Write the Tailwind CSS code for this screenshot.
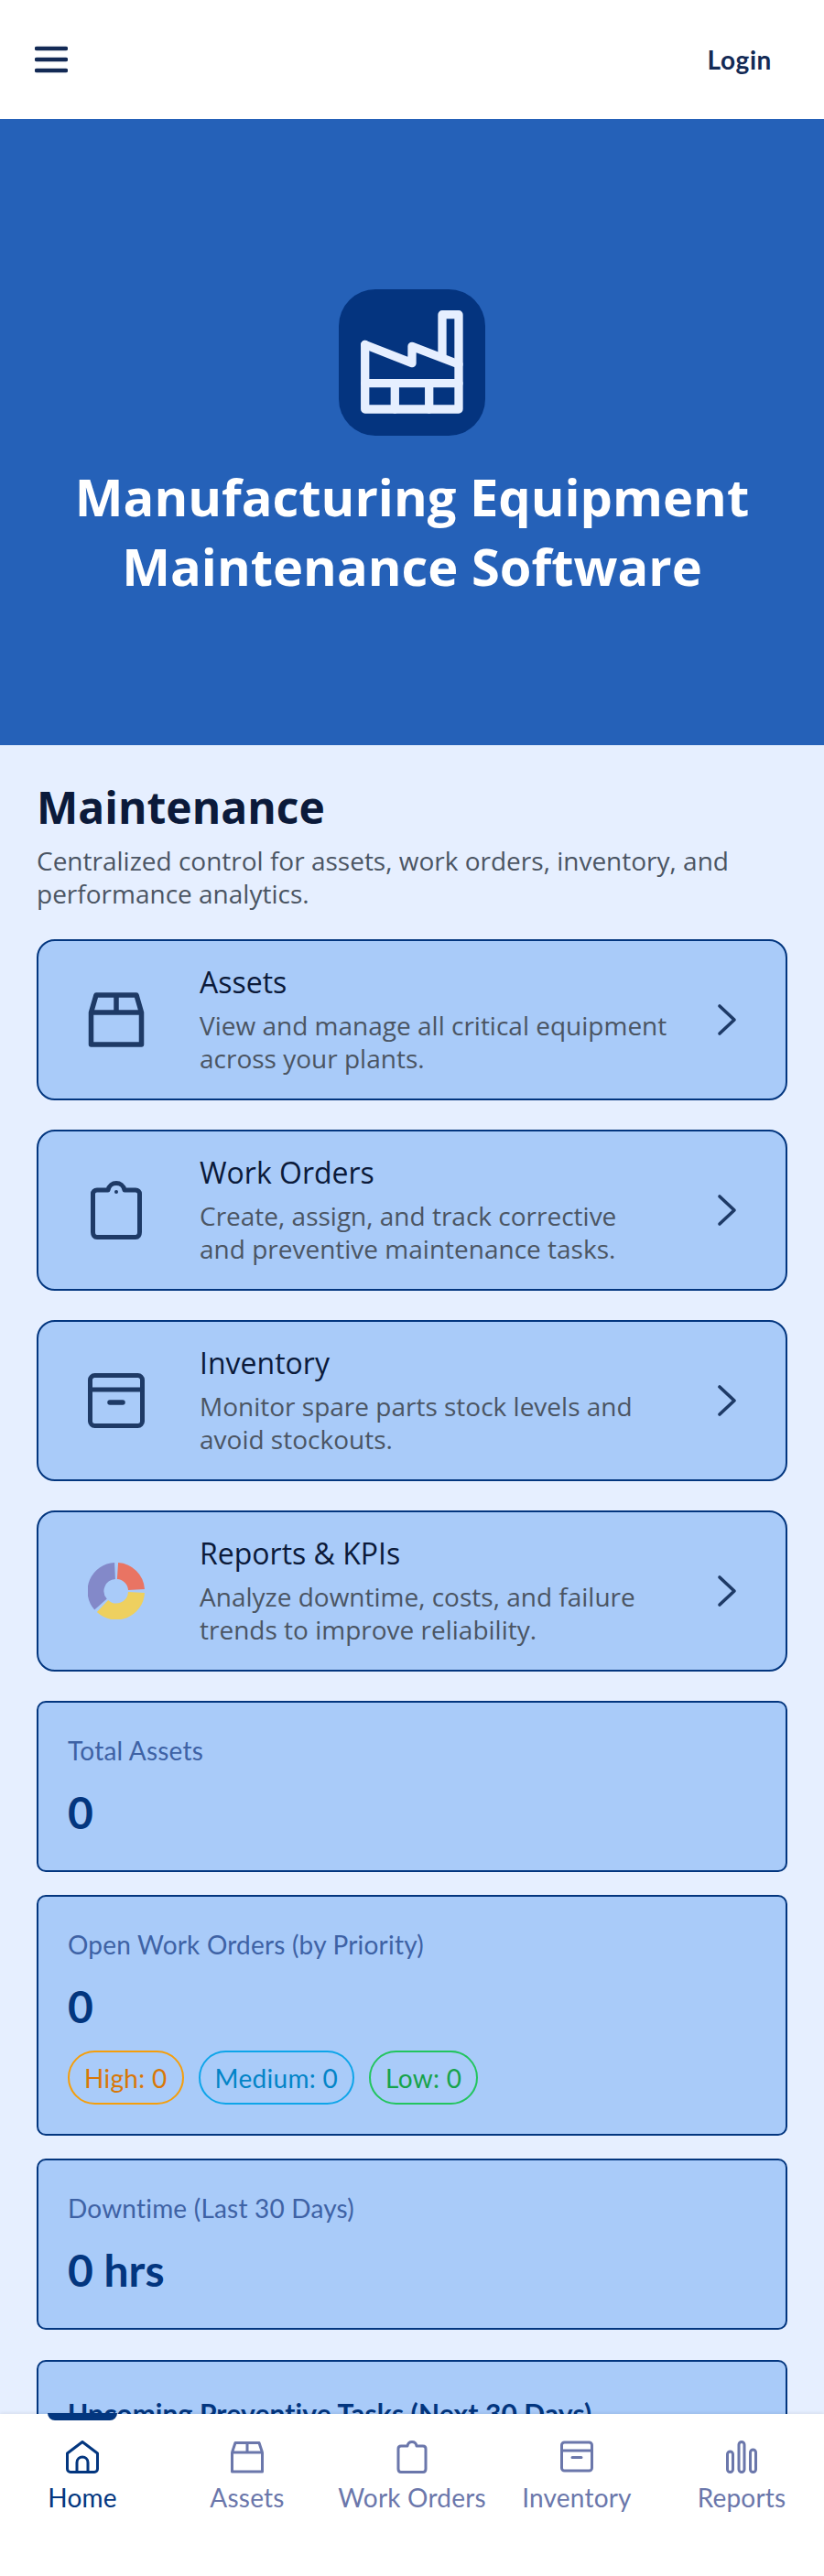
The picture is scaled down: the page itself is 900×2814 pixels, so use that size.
<!DOCTYPE html>
<html lang="en">
<head>
  <meta charset="UTF-8" />
  <meta name="viewport" content="width=device-width, initial-scale=1" />
  <title>Manufacturing Equipment Maintenance Software</title>
  <script src="https://cdn.jsdelivr.net/npm/@tailwindcss/browser@4"></script>
</head>
<body class="bg-white font-['Open_Sans',sans-serif]">
  <div class="relative flex h-[2814px] w-[900px] flex-col overflow-hidden">

    <!-- Header -->
    <header class="flex h-[130px] shrink-0 items-center justify-between bg-white pl-[38px] pr-[57px]">
      <svg class="h-[30px] w-[36px]" viewBox="0 0 36 30" fill="none" stroke="#132a55" stroke-width="4.500" stroke-linecap="round">
        <path d="M2 3h32M2 15h32M2 27h32" />
      </svg>
      <span class="font-['Lato',sans-serif] text-[28px] font-bold tracking-[0.6px] text-[#132a55]">Login</span>
    </header>

    <main class="min-h-0 flex-1 overflow-hidden bg-[#e6efff]">
      <!-- Hero -->
      <section class="flex h-[684px] flex-col items-center bg-[#2561b8] pt-[186px]">
        <div class="flex h-[160px] w-[160px] items-center justify-center rounded-[40px] bg-[#04347f]">
          <svg class="h-[160px] w-[160px]" viewBox="0 0 160 160" fill="none" stroke="#e6efff" stroke-width="9.3" stroke-linejoin="round" stroke-linecap="round">
            <path d="M28.7 60.5V131H131V27.7H113V72" />
            <path d="M28.7 60.5L80 80.7V62.3L131 82" />
            <path d="M28.7 102.7H131M61.3 102.7V131M98.7 102.7V131" />
          </svg>
        </div>
        <h1 class="mt-[28px] text-center text-[56px] font-bold leading-[76px] text-white">Manufacturing Equipment<br />Maintenance Software</h1>
      </section>

      <section class="px-[40px] pt-[34px]">
        <h2 class="text-[48px] font-bold leading-[68px] text-[#0b1a3a]">Maintenance</h2>
        <p class="mt-[6px] text-[28px] leading-[36px] text-[#4b5563]">Centralized control for assets, work orders, inventory, and performance analytics.</p>

        <!-- Nav cards -->
        <div class="mt-[32px] flex flex-col gap-[32px]">
          <a class="flex h-[176px] items-center rounded-[20px] border-2 border-[#03367f] bg-[#a9cbf9] pl-[54px] pr-[52px]">
            <svg class="h-[60px] w-[62px] shrink-0" viewBox="0 0 62 60" fill="none" stroke="#1e3a66" stroke-width="5.5" stroke-linejoin="round">
              <path d="M3.5 22H58.5V57H3.5ZM3.5 22L9 3H53L58.5 22M31 3V22" />
            </svg>
            <div class="ml-[60px] w-[522px] shrink-0">
              <h3 class="text-[32px] font-medium leading-[38px] text-[#0b1a3a]">Assets</h3>
              <p class="mt-[10px] text-[28px] leading-[36px] text-[#4b5563]">View and manage all critical equipment across your plants.</p>
            </div>
            <svg class="ml-auto h-[36px] w-[24px] shrink-0" viewBox="0 0 24 36" fill="none" stroke="#1e3a66" stroke-width="3.6" stroke-linecap="round" stroke-linejoin="round">
              <path d="M4 3L20 18L4 33" />
            </svg>
          </a>

          <a class="flex h-[176px] items-center rounded-[20px] border-2 border-[#03367f] bg-[#a9cbf9] pl-[54px] pr-[52px]">
            <svg class="h-[64px] w-[62px] shrink-0" viewBox="0 0 62 64" fill="none" stroke="#1e3a66" stroke-width="5" stroke-linejoin="round">
              <path d="M10 10H22C23 5 27 2.5 31 2.5C35 2.5 39 5 40 10H52C55 10 56.500 12 56.500 14V56C56.500 59 55 61.500 52 61.500H10C7 61.500 5.500 59 5.500 56V14C5.500 12 7 10 10 10Z" />
              <circle cx="31" cy="12" r="2" fill="#1e3a66" stroke="none" />
            </svg>
            <div class="ml-[60px] w-[522px] shrink-0">
              <h3 class="text-[32px] font-medium leading-[38px] text-[#0b1a3a]">Work Orders</h3>
              <p class="mt-[10px] text-[28px] leading-[36px] text-[#4b5563]">Create, assign, and track corrective<br />and preventive maintenance tasks.</p>
            </div>
            <svg class="ml-auto h-[36px] w-[24px] shrink-0" viewBox="0 0 24 36" fill="none" stroke="#1e3a66" stroke-width="3.6" stroke-linecap="round" stroke-linejoin="round">
              <path d="M4 3L20 18L4 33" />
            </svg>
          </a>

          <a class="flex h-[176px] items-center rounded-[20px] border-2 border-[#03367f] bg-[#a9cbf9] pl-[54px] pr-[52px]">
            <svg class="h-[60px] w-[62px] shrink-0" viewBox="0 0 62 60" fill="none" stroke="#1e3a66" stroke-width="5" stroke-linejoin="round" stroke-linecap="round">
              <rect x="2.500" y="2.500" width="57" height="55" rx="5" />
              <path d="M2.500 18H59.500" />
              <path d="M24 32H38" stroke-width="5.500" />
            </svg>
            <div class="ml-[60px] w-[522px] shrink-0">
              <h3 class="text-[32px] font-medium leading-[38px] text-[#0b1a3a]">Inventory</h3>
              <p class="mt-[10px] text-[28px] leading-[36px] text-[#4b5563]">Monitor spare parts stock levels and avoid stockouts.</p>
            </div>
            <svg class="ml-auto h-[36px] w-[24px] shrink-0" viewBox="0 0 24 36" fill="none" stroke="#1e3a66" stroke-width="3.6" stroke-linecap="round" stroke-linejoin="round">
              <path d="M4 3L20 18L4 33" />
            </svg>
          </a>

          <a class="flex h-[176px] items-center rounded-[20px] border-2 border-[#03367f] bg-[#a9cbf9] pl-[54px] pr-[52px]">
            <svg class="h-[62px] w-[62px] shrink-0" viewBox="0 0 62 62" fill="none" stroke-width="18">
              <path d="M32.500 9A22 22 0 0 1 53 29.500" stroke="#e97463" />
              <path d="M53 32.500A22 22 0 0 1 16 47.500" stroke="#eed05f" />
              <path d="M14 45.500A22 22 0 0 1 29.500 9" stroke="#8389c9" />
            </svg>
            <div class="ml-[60px] w-[522px] shrink-0">
              <h3 class="text-[32px] font-medium leading-[38px] text-[#0b1a3a]">Reports &amp; KPIs</h3>
              <p class="mt-[10px] text-[28px] leading-[36px] text-[#4b5563]">Analyze downtime, costs, and failure trends to improve reliability.</p>
            </div>
            <svg class="ml-auto h-[36px] w-[24px] shrink-0" viewBox="0 0 24 36" fill="none" stroke="#1e3a66" stroke-width="3.6" stroke-linecap="round" stroke-linejoin="round">
              <path d="M4 3L20 18L4 33" />
            </svg>
          </a>
        </div>

        <!-- Stat cards -->
        <div class="mt-[32px] font-['Lato',sans-serif]">
          <div class="h-[187px] rounded-[10px] border-2 border-[#03367f] bg-[#a9cbf9] px-[32px] pt-[34px]">
            <p class="text-[28px] leading-[36px] tracking-[0.2px] text-[#3e62a5]">Total Assets</p>
            <p class="mt-[22px] text-[48px] font-bold leading-[56px] text-[#03367f]">0</p>
          </div>
          <div class="mt-[25px] h-[263px] rounded-[10px] border-2 border-[#03367f] bg-[#a9cbf9] px-[32px] pt-[34px]">
            <p class="text-[28px] leading-[36px] tracking-[0.2px] text-[#3e62a5]">Open Work Orders (by Priority)</p>
            <p class="mt-[22px] text-[48px] font-bold leading-[56px] text-[#03367f]">0</p>
            <div class="mt-[20px] flex gap-[16px] text-[28px] tracking-[0.3px]">
              <span class="flex h-[59px] items-center rounded-full border-2 border-[#f59e0b] px-[16px] text-[#d97706]">High: 0</span>
              <span class="flex h-[59px] items-center rounded-full border-2 border-[#0ea5e9] px-[16px] text-[#0284c7]">Medium: 0</span>
              <span class="flex h-[59px] items-center rounded-full border-2 border-[#22c55e] px-[16px] text-[#16a34a]">Low: 0</span>
            </div>
          </div>
          <div class="mt-[25px] h-[187px] rounded-[10px] border-2 border-[#03367f] bg-[#a9cbf9] px-[32px] pt-[34px]">
            <p class="text-[28px] leading-[36px] tracking-[0.2px] text-[#3e62a5]">Downtime (Last 30 Days)</p>
            <p class="mt-[22px] text-[48px] font-bold leading-[56px] text-[#03367f]">0 hrs</p>
          </div>
          <div class="mt-[33px] h-[187px] rounded-[10px] border-2 border-[#03367f] bg-[#a9cbf9] px-[32px] pt-[38px]">
            <p class="text-[30px] font-bold leading-[36px] tracking-[0.1px] text-[#03367f]">Upcoming Preventive Tasks (Next 30 Days)</p>
          </div>
        </div>
      </section>
    </main>

    <!-- Bottom nav -->
    <nav class="relative grid h-[177px] shrink-0 grid-cols-5 bg-white pt-[29px] font-['Lato',sans-serif] text-[28px] tracking-[0.2px] text-[#6b77ab] shadow-[0_-1px_4px_rgba(0,0,0,0.08)]">
      <span class="absolute left-[52px] top-[-1px] h-[8px] w-[76px] rounded-b-[8px] bg-[#03367f]"></span>
      <div class="flex flex-col items-center text-[#03367f]">
        <svg class="h-[36px] w-[36px]" viewBox="0 0 36 36" fill="none" stroke="#03367f" stroke-width="3" stroke-linejoin="round">
          <path d="M1.500 14L18 1.500L34.500 14V31C34.500 33 33 34.500 31 34.500H5C3 34.500 1.500 33 1.500 31Z" />
          <path d="M12 34.500V24C12 20 15 18 18 18C21 18 24 20 24 24V34.500" />
        </svg>
        <span class="mt-[8px] leading-[36px]">Home</span>
      </div>
      <div class="flex flex-col items-center">
        <svg class="h-[36px] w-[36px]" viewBox="0 0 36 36" fill="none" stroke="#6b77ab" stroke-width="3" stroke-linejoin="round">
          <path d="M1.500 13H34.500V34H1.500ZM1.500 13L5 2.500H31L34.500 13M18 2.500V13" />
        </svg>
        <span class="mt-[8px] leading-[36px]">Assets</span>
      </div>
      <div class="flex flex-col items-center">
        <svg class="h-[36px] w-[36px]" viewBox="0 0 36 36" fill="none" stroke="#6b77ab" stroke-width="3" stroke-linejoin="round">
          <path d="M6 6H13C13.500 3 15.500 1.500 18 1.500C20.500 1.500 22.500 3 23 6H30C32 6 33 7.500 33 9V31C33 33 32 34.500 30 34.500H6C4 34.500 3 33 3 31V9C3 7.500 4 6 6 6Z" />
        </svg>
        <span class="mt-[8px] leading-[36px]">Work Orders</span>
      </div>
      <div class="flex flex-col items-center">
        <svg class="h-[36px] w-[36px]" viewBox="0 0 36 36" fill="none" stroke="#6b77ab" stroke-width="3" stroke-linejoin="round" stroke-linecap="round">
          <rect x="1.500" y="2" width="33" height="31" rx="3" />
          <path d="M1.500 11H34.500M13 18.500H23" />
        </svg>
        <span class="mt-[8px] leading-[36px]">Inventory</span>
      </div>
      <div class="flex flex-col items-center">
        <svg class="h-[36px] w-[36px]" viewBox="0 0 36 36" fill="none" stroke="#6b77ab" stroke-width="3">
          <rect x="2.500" y="12" width="6" height="22.500" rx="3" />
          <rect x="15" y="1.500" width="6" height="33" rx="3" />
          <rect x="27.500" y="10" width="6" height="24.500" rx="3" />
        </svg>
        <span class="mt-[8px] leading-[36px]">Reports</span>
      </div>
    </nav>
  </div>
</body>
</html>
